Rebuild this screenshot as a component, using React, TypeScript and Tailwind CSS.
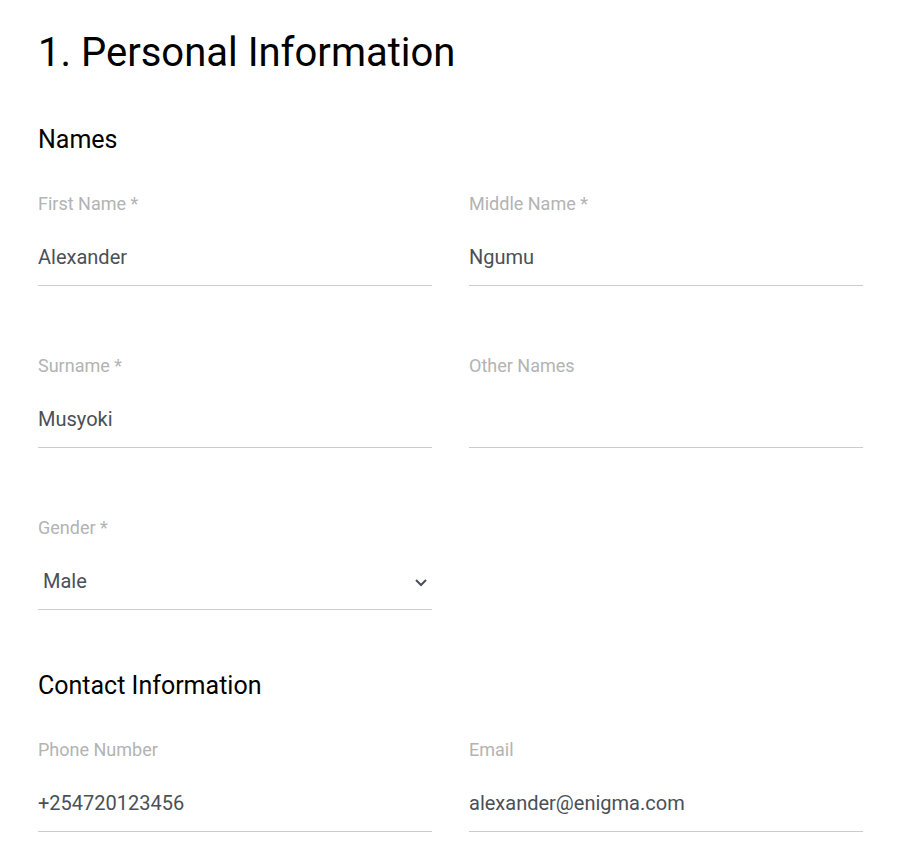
import React from "react";

const control =
  "h-[57px] w-full border-b border-[#cccccc] bg-transparent text-[20px] text-[#495057] outline-none";

function Field({ id, label, children }: { id: string; label: string; children: React.ReactNode }) {
  return (
    <div className="flex flex-col">
      <label htmlFor={id} className="text-[18px] leading-[26px] text-[#b3b3b3]">
        {label}
      </label>
      <div className="relative mt-3">{children}</div>
    </div>
  );
}

function TextField({ id, label, value, type = "text" }: { id: string; label: string; value: string; type?: string }) {
  return (
    <Field id={id} label={label}>
      <input id={id} type={type} defaultValue={value} className={control} />
    </Field>
  );
}

export default function App() {
  return (
    <main className="min-h-screen bg-white pt-[29px] pr-10 pb-6 pl-[38px] font-[Roboto,sans-serif] text-black">
      <h1 className="text-[40px] leading-[48px]">1. Personal Information</h1>
      <form>
        <section className="mt-12">
          <h2 className="text-[25px] leading-[30px]">Names</h2>
          <div className="mt-9 grid grid-cols-2 gap-x-[37px] gap-y-[67px]">
            <TextField id="first" label="First Name *" value="Alexander" />
            <TextField id="middle" label="Middle Name *" value="Ngumu" />
            <TextField id="surname" label="Surname *" value="Musyoki" />
            <TextField id="other" label="Other Names" value="" />
            <Field id="gender" label="Gender *">
              <select id="gender" defaultValue="Male" className={`${control} appearance-none px-[5px]`}>
                <option>Male</option>
                <option>Female</option>
              </select>
              <svg
                className="pointer-events-none absolute top-[26px] right-[5px]"
                width="12"
                height="8"
                viewBox="0 0 12 8"
                fill="none"
                stroke="#495057"
                strokeWidth="2"
              >
                <path d="M1 1l5 5 5-5" />
              </svg>
            </Field>
          </div>
        </section>
        <section className="mt-[61px]">
          <h2 className="text-[25px] leading-[30px]">Contact Information</h2>
          <div className="mt-9 grid grid-cols-2 gap-x-[37px]">
            <TextField id="phone" label="Phone Number" value="+254720123456" type="tel" />
            <TextField id="email" label="Email" value="alexander@enigma.com" type="email" />
          </div>
        </section>
      </form>
    </main>
  );
}
